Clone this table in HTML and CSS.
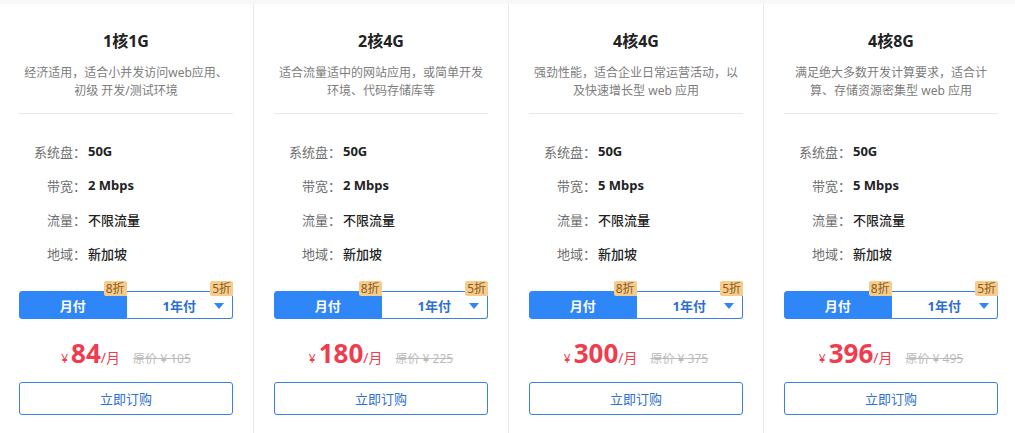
FILE: index.html
```html
<!DOCTYPE html>
<html lang="zh-CN">
<head>
    <meta charset="UTF-8">
    <meta name="viewport" content="width=device-width, initial-scale=1.0">
    <title>云服务器套餐</title>
    <link rel="stylesheet" href="styles.css">
</head>
<body>
    <div class="plans">
        <div class="card">
            <div class="head">
                <h2 class="title">1核1G</h2>
                <p class="desc">经济适用，适合小并发访问web应用、<br>初级 开发/测试环境</p>
            </div>
            <ul class="specs">
                <li><span class="label">系统盘：</span><span class="value">50G</span></li>
                <li><span class="label">带宽：</span><span class="value">2 Mbps</span></li>
                <li><span class="label">流量：</span><span class="value cn">不限流量</span></li>
                <li><span class="label">地域：</span><span class="value cn">新加坡</span></li>
            </ul>
            <div class="toggle">
                <div class="opt active">月付<span class="badge">8折</span></div>
                <div class="opt">1年付<i class="caret"></i><span class="badge">5折</span></div>
            </div>
            <div class="price">
                <span class="yen">¥</span><span class="num">84</span><span class="unit">/月</span>
                <span class="old">原价 ¥ 105</span>
            </div>
            <button class="buy">立即订购</button>
        </div>

        <div class="card">
            <div class="head">
                <h2 class="title">2核4G</h2>
                <p class="desc">适合流量适中的网站应用，或简单开发<br>环境、代码存储库等</p>
            </div>
            <ul class="specs">
                <li><span class="label">系统盘：</span><span class="value">50G</span></li>
                <li><span class="label">带宽：</span><span class="value">2 Mbps</span></li>
                <li><span class="label">流量：</span><span class="value cn">不限流量</span></li>
                <li><span class="label">地域：</span><span class="value cn">新加坡</span></li>
            </ul>
            <div class="toggle">
                <div class="opt active">月付<span class="badge">8折</span></div>
                <div class="opt">1年付<i class="caret"></i><span class="badge">5折</span></div>
            </div>
            <div class="price">
                <span class="yen">¥</span><span class="num">180</span><span class="unit">/月</span>
                <span class="old">原价 ¥ 225</span>
            </div>
            <button class="buy">立即订购</button>
        </div>

        <div class="card">
            <div class="head">
                <h2 class="title">4核4G</h2>
                <p class="desc">强劲性能，适合企业日常运营活动，以<br>及快速增长型 web 应用</p>
            </div>
            <ul class="specs">
                <li><span class="label">系统盘：</span><span class="value">50G</span></li>
                <li><span class="label">带宽：</span><span class="value">5 Mbps</span></li>
                <li><span class="label">流量：</span><span class="value cn">不限流量</span></li>
                <li><span class="label">地域：</span><span class="value cn">新加坡</span></li>
            </ul>
            <div class="toggle">
                <div class="opt active">月付<span class="badge">8折</span></div>
                <div class="opt">1年付<i class="caret"></i><span class="badge">5折</span></div>
            </div>
            <div class="price">
                <span class="yen">¥</span><span class="num">300</span><span class="unit">/月</span>
                <span class="old">原价 ¥ 375</span>
            </div>
            <button class="buy">立即订购</button>
        </div>

        <div class="card">
            <div class="head">
                <h2 class="title">4核8G</h2>
                <p class="desc">满足绝大多数开发计算要求，适合计<br>算、存储资源密集型 web 应用</p>
            </div>
            <ul class="specs">
                <li><span class="label">系统盘：</span><span class="value">50G</span></li>
                <li><span class="label">带宽：</span><span class="value">5 Mbps</span></li>
                <li><span class="label">流量：</span><span class="value cn">不限流量</span></li>
                <li><span class="label">地域：</span><span class="value cn">新加坡</span></li>
            </ul>
            <div class="toggle">
                <div class="opt active">月付<span class="badge">8折</span></div>
                <div class="opt">1年付<i class="caret"></i><span class="badge">5折</span></div>
            </div>
            <div class="price">
                <span class="yen">¥</span><span class="num">396</span><span class="unit">/月</span>
                <span class="old">原价 ¥ 495</span>
            </div>
            <button class="buy">立即订购</button>
        </div>
    </div>
</body>
</html>
```

FILE: styles.css
```css
body {
    margin: 0;
    background-color: #f7f8fa;
    font-family: 'Noto Sans', 'Noto Sans CJK SC', sans-serif;
    color: #333;
    overflow: hidden;
}
.plans {
    display: grid;
    grid-template-columns: repeat(4, 255px);
    margin: 4px 0 0 -1px;
}
.card {
    background-color: #fff;
    border-right: 1px solid #e8e8e8;
    padding: 26px 20px 0;
    height: 429px;
    box-sizing: border-box;
}
.head {
    text-align: center;
    padding-bottom: 13px;
    border-bottom: 1px solid #e8e8e8;
}
.title {
    margin: 0;
    font-size: 16px;
    line-height: 22px;
    font-weight: bold;
    color: #222;
}
.desc {
    margin: 12px 0 0;
    font-size: 12px;
    line-height: 18px;
    color: #7c7c7c;
}
.specs {
    list-style: none;
    margin: 20px 0 0;
    padding: 0;
}
.specs li {
    display: flex;
    align-items: center;
    height: 34px;
    font-size: 13px;
}
.label {
    width: 67px;
    margin-right: 2px;
    text-align: right;
    color: #6e6e6e;
}
.value {
    font-weight: bold;
    color: #222;
}
.value.cn {
    font-weight: 500;
}
.toggle {
    display: flex;
    margin-top: 21px;
    height: 28px;
}
.opt {
    position: relative;
    flex: 1;
    display: flex;
    align-items: center;
    justify-content: center;
    font-size: 13px;
    font-weight: bold;
    color: #2f6fd0;
    border: 1px solid #3b80e6;
    border-left: none;
    border-radius: 0 3px 3px 0;
    background-color: #fff;
}
.opt.active {
    color: #fff;
    background-color: #2f86f6;
    border: 1px solid #2f86f6;
    border-radius: 3px 0 0 3px;
}
.badge {
    position: absolute;
    top: -11px;
    right: -1px;
    padding: 0 2px;
    height: 15px;
    line-height: 15px;
    font-size: 12px;
    font-weight: normal;
    color: #8a5b1c;
    background-color: #f5cc8c;
    border-radius: 2px 2px 0 2px;
}
.caret {
    position: absolute;
    right: 8px;
    top: 11px;
    border-left: 5px solid transparent;
    border-right: 5px solid transparent;
    border-top: 6px solid #2f86f6;
}
.price {
    display: flex;
    align-items: baseline;
    justify-content: center;
    margin-top: 17px;
    height: 34px;
    color: #ef3c4e;
}
.yen {
    font-size: 12px;
    margin-right: 3px;
}
.num {
    font-size: 26px;
    line-height: 34px;
    font-weight: bold;
}
.unit {
    font-size: 14px;
}
.old {
    margin-left: 13px;
    font-size: 12px;
    color: #bbb;
    text-decoration: line-through;
}
.buy {
    display: block;
    width: 100%;
    height: 33px;
    margin-top: 12px;
    background-color: #fff;
    border: 1px solid #3b80e6;
    border-radius: 3px;
    color: #2f6fd0;
    font-family: inherit;
    font-size: 13px;
    cursor: pointer;
}
.buy:hover {
    background-color: #f2f7ff;
}
```
